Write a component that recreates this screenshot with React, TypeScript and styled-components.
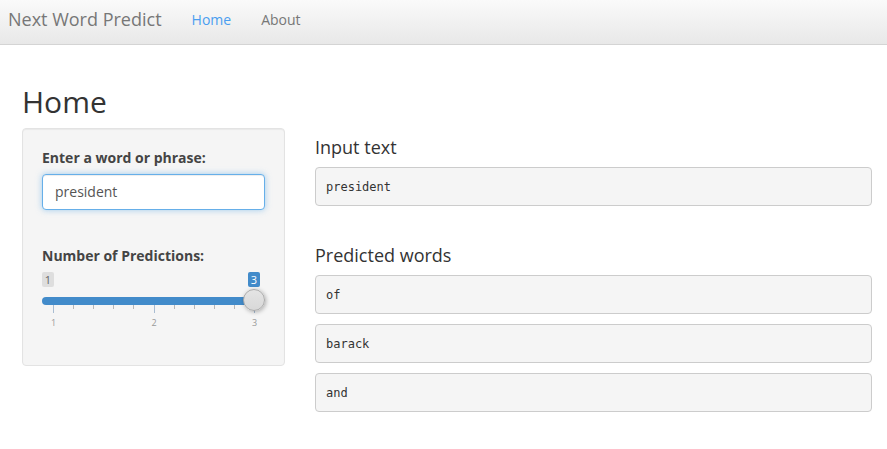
import React from "react";
import styled, { createGlobalStyle } from "styled-components";

const Global = createGlobalStyle`
  html, body { margin: 0; padding: 0; background: #fff; }
  body { font-family: "Open Sans", "Liberation Sans", sans-serif; font-size: 14px; color: #333; }
  * { box-sizing: border-box; }
`;

const Navbar = styled.nav`
  height: 45px;
  display: flex;
  align-items: flex-start;
  background: linear-gradient(to bottom, #fafafa 0%, #e8e8e8 100%);
  border-bottom: 1px solid #d4d4d4;
  padding-left: 0;
`;

const Brand = styled.div`
  font-size: 18px;
  line-height: 20px;
  color: #777;
  padding: 9px 15px 0 8px;
`;

const NavLink = styled.a<{ $active?: boolean }>`
  font-size: 14px;
  line-height: 20px;
  padding: 10px 15px 0 15px;
  color: ${(p) => (p.$active ? "#4a9ef0" : "#777")};
  text-decoration: none;
`;

const Container = styled.div`
  padding: 0 15px 0 22px;
`;

const Title = styled.h2`
  font-size: 30px;
  font-weight: 400;
  line-height: 33px;
  margin: 40px 0 10px 0;
  color: #333;
`;

const Row = styled.div`
  display: flex;
  gap: 30px;
  align-items: flex-start;
`;

const Well = styled.div`
  width: 263px;
  flex-shrink: 0;
  background: #f5f5f5;
  border: 1px solid #e3e3e3;
  border-radius: 4px;
  box-shadow: inset 0 1px 1px rgba(0, 0, 0, 0.05);
  padding: 19px 19px 19px 19px;
  height: 238px;
`;

const Label = styled.label`
  display: block;
  font-weight: 700;
  font-size: 14px;
  line-height: 20px;
  color: #444;
  margin-bottom: 6px;
`;

const TextInput = styled.div`
  height: 36px;
  border: 1px solid #66afe9;
  border-radius: 4px;
  background: #fff;
  box-shadow: inset 0 1px 1px rgba(0, 0, 0, 0.075), 0 0 6px rgba(102, 175, 233, 0.6);
  padding: 0 12px;
  font-size: 14px;
  line-height: 34px;
  color: #555;
`;

const Group = styled.div<{ $mb: number }>`
  margin-bottom: ${(p) => p.$mb}px;
`;

const Slider = styled.div`
  position: relative;
  height: 60px;
  margin-top: 5px;
`;

const ValueTag = styled.span<{ $primary?: boolean }>`
  position: absolute;
  top: 0;
  ${(p) => (p.$primary ? "right: 5px;" : "left: 0;")}
  width: 12px;
  height: 15px;
  border-radius: 2px;
  font-size: 11px;
  line-height: 15px;
  text-align: center;
  background: ${(p) => (p.$primary ? "#428bca" : "#dedede")};
  color: ${(p) => (p.$primary ? "#fff" : "#666")};
`;

const Bar = styled.div`
  position: absolute;
  top: 25px;
  left: 0;
  right: 11px;
  height: 8px;
  border-radius: 4px;
  background: #428bca;
`;

const Handle = styled.div`
  position: absolute;
  top: 17px;
  right: 0;
  width: 22px;
  height: 22px;
  border-radius: 50%;
  background: linear-gradient(to bottom, #e4e4e4, #d8d8d8);
  border: 1px solid #aaa;
  box-shadow: 1px 1px 4px rgba(0, 0, 0, 0.3);
`;

const Tick = styled.span<{ $major?: boolean }>`
  position: absolute;
  top: 33px;
  width: 1px;
  height: ${(p) => (p.$major ? 8 : 4)}px;
  background: ${(p) => (p.$major ? "#a9bdd2" : "#b8b8b8")};
`;

const GridLabel = styled.span`
  position: absolute;
  top: 45px;
  width: 20px;
  margin-left: -10px;
  text-align: center;
  font-size: 9px;
  line-height: 12px;
  color: #999;
`;

const Main = styled.div`
  flex: 1;
  min-width: 0;
`;

const Heading = styled.h4`
  font-size: 18px;
  font-weight: 400;
  line-height: 20px;
  margin: 9px 0 10px 0;
  color: #333;
`;

const Output = styled.pre`
  margin: 0 0 10px 0;
  height: 39px;
  padding: 0 10px;
  background: #f5f5f5;
  border: 1px solid #ccc;
  border-radius: 4px;
  font-family: "DejaVu Sans Mono", "Liberation Mono", monospace;
  font-size: 12px;
  line-height: 38px;
  color: #333;
`;

const Spacer = styled.div`
  height: 20px;
`;

const trackStart = 11;
const trackLen = 201;

export default function App() {
  const ticks = Array.from({ length: 11 }, (_, i) => i);
  return (
    <>
      <Global />
      <Navbar>
        <Brand>Next Word Predict</Brand>
        <NavLink $active>Home</NavLink>
        <NavLink>About</NavLink>
      </Navbar>
      <Container>
        <Title>Home</Title>
        <Row>
          <Well>
            <Group $mb={36}>
              <Label>Enter a word or phrase:</Label>
              <TextInput>president</TextInput>
            </Group>
            <Group $mb={0}>
              <Label>Number of Predictions:</Label>
              <Slider>
                <ValueTag>1</ValueTag>
                <ValueTag $primary>3</ValueTag>
                <Bar />
                {ticks.map((i) => (
                  <Tick
                    key={i}
                    $major={i % 5 === 0}
                    style={{ left: trackStart + (trackLen * i) / 10 }}
                  />
                ))}
                {[1, 2, 3].map((n, i) => (
                  <GridLabel key={n} style={{ left: trackStart + (trackLen * i) / 2 + 0.5 }}>
                    {n}
                  </GridLabel>
                ))}
                <Handle />
              </Slider>
            </Group>
          </Well>
          <Main>
            <Heading>Input text</Heading>
            <Output>president</Output>
            <Spacer />
            <Heading>Predicted words</Heading>
            <Output>of</Output>
            <Output>barack</Output>
            <Output>and</Output>
          </Main>
        </Row>
      </Container>
    </>
  );
}
